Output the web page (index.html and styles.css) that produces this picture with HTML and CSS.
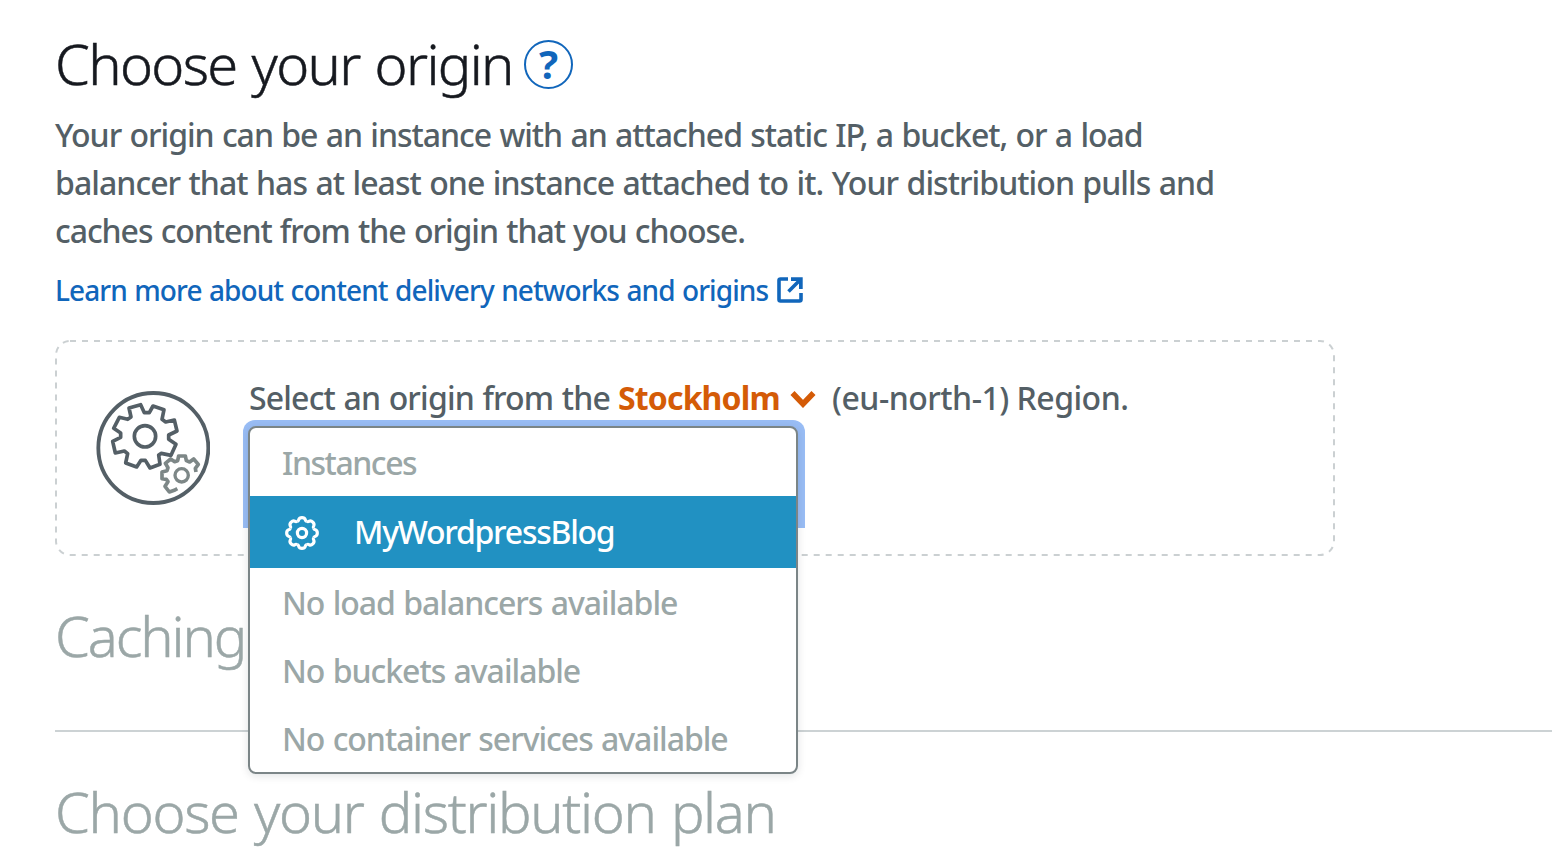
FILE: index.html
```html
<!DOCTYPE html>
<html lang="en">
<head>
<meta charset="utf-8">
<title>Choose your origin</title>
<link rel="stylesheet" href="styles.css">
</head>
<body>
<main class="page">
  <div class="heading-row">
    <h1 class="heading heading-main">Choose your origin</h1>
    <span class="help">?</span>
  </div>
  <p class="intro">Your origin can be an instance with an attached static IP, a bucket, or a load<br><span class="intro-mid">balancer that has at least one instance attached to it. Your distribution pulls and</span><br><span class="intro-end">caches content from the origin that you choose.</span></p>
  <a class="learn"><span class="learn-text">Learn more about content delivery networks and origins</span>
    <svg class="external" viewBox="0 0 26 26" width="26" height="26"><path d="M11 2H3.5Q2 2 2 3.5V22.5Q2 24 3.5 24H22.5Q24 24 24 22.5V16M11.5 14.5L22 4" fill="none" stroke="currentColor" stroke-width="3.6"/><path d="M14 0.3H25.7V12H22V4H14Z" fill="currentColor"/></svg>
  </a>
  <section class="origin-box">
    <svg class="box-frame" width="1280" height="216"><rect x="1" y="1" width="1278" height="214" rx="14"/></svg>
    <svg class="gears" viewBox="48 48 342 342" width="114" height="114" fill="none" stroke-linejoin="round">
      <circle cx="220" cy="219" r="165" stroke="#545f66" stroke-width="11.5"/>
      <path d="M147 99L182 89L193 113H208L219 93L252 104L246 133L257 141L283 135L291 168L266 180V193L288 208L273 241L244 235L236 240L240 268L210 279L196 256H183L170 276L137 264L143 236L133 228L106 234L98 199L122 187V174L101 160L118 127L143 133L153 126Z" stroke="#545f66" stroke-width="11"/>
      <circle cx="195" cy="184" r="32" stroke="#545f66" stroke-width="11"/>
      <path d="M292 341L285 345L268 351L255 334L264 320L259 313L246 311V291L261 287L264 278L256 265L272 252L284 260L293 257L296 243H316L319 257L329 261L341 252L355 268L346 280L348 291" stroke="#7d8787" stroke-width="11"/>
      <circle cx="305" cy="301" r="20" stroke="#7d8787" stroke-width="10"/>
    </svg>
    <div class="chooser">
      <div class="region-line"><span class="lead">Select an origin from the</span><span class="region">Stockholm</span><svg class="chevron" viewBox="0 0 26 18" width="26" height="18"><path d="M2.5 3L13 14L23.5 3" fill="none" stroke="currentColor" stroke-width="5.6"/></svg><span class="code">(eu-north-1) Region.</span></div>
      <div class="field">
        <div class="menu">
          <div class="row instances">Instances</div>
          <div class="row selected">
            <svg class="cog" viewBox="-18 -18 36 36" width="36" height="36" fill="none" stroke="#fff" stroke-width="3.2">
              <defs><path id="tooth" d="M-4.8 -11.6Q-3.5 -12.1 -3.2 -13.4Q-2.6 -15.3 0 -15.3Q2.6 -15.3 3.2 -13.4Q3.5 -12.1 4.8 -11.6"/></defs>
              <use href="#tooth"/><use href="#tooth" transform="rotate(45)"/><use href="#tooth" transform="rotate(90)"/><use href="#tooth" transform="rotate(135)"/><use href="#tooth" transform="rotate(180)"/><use href="#tooth" transform="rotate(225)"/><use href="#tooth" transform="rotate(270)"/><use href="#tooth" transform="rotate(315)"/>
              <circle r="4.6"/>
            </svg>
            <span class="name">MyWordpressBlog</span>
          </div>
          <div class="row">No load balancers available</div>
          <div class="row">No buckets available</div>
          <div class="row">No container services available</div>
        </div>
      </div>
    </div>
  </section>
  <h2 class="heading muted caching">Caching</h2>
  <hr class="divider">
  <h2 class="heading muted plan">Choose your distribution plan</h2>
</main>
</body>
</html>
```
FILE: styles.css
```css
html, body { margin: 0; height: 860px; overflow: hidden; background: #fff; }
body { font-family: "Noto Sans", "Open Sans", sans-serif; font-size: 32px; font-weight: 500; color: #545f66; }
.page { padding: 28px 0 0 55px; }
.heading-row { display: flex; align-items: center; height: 70px; gap: 11px; }
.heading { margin: 0; font-size: 56px; line-height: 70px; font-weight: 300; white-space: nowrap; -webkit-text-stroke: 0.5px currentColor; word-spacing: 2px; }
.heading-main { width: 458px; color: #16191f; letter-spacing: -1.65px; }
.muted { color: #9ba7a7; letter-spacing: -1.3px; }
.help { box-sizing: border-box; width: 49px; height: 49px; margin-top: 2px; border: 2px solid #1166bb; border-radius: 50%; color: #1166bb; font-size: 40px; line-height: 44px; font-weight: 700; text-align: center; }
.intro { margin: 13px 0 0; line-height: 48px; letter-spacing: -1.02px; word-spacing: 1px; white-space: nowrap; }
.intro-mid { letter-spacing: -0.95px; }
.intro-end { letter-spacing: -1.05px; }
.learn { display: flex; align-items: center; gap: 10px; height: 42px; margin-top: 14px; color: #1166bb; font-size: 28px; letter-spacing: -0.91px; word-spacing: 1px; white-space: nowrap; }
.learn-text { width: 712px; }
.origin-box { position: relative; box-sizing: border-box; display: flex; align-items: flex-start; gap: 38px; width: 1280px; height: 216px; margin-top: 29px; padding: 34px 0 0 41px; }
.box-frame { position: absolute; inset: 0; fill: none; stroke: #cbd0d2; stroke-width: 2; stroke-dasharray: 6 6; }
.gears { flex: none; margin-top: 17px; }
.chooser { position: relative; }
.region-line { display: flex; align-items: center; height: 46px; line-height: 50px; white-space: nowrap; }
.region-line span { padding-top: 2px; }
.lead { width: 369px; padding-left: 1px; letter-spacing: -0.83px; word-spacing: 1px; }
.region { width: 172px; color: #d45b07; font-weight: 700; letter-spacing: -0.85px; }
.chevron { color: #d45b07; margin-top: 4px; }
.code { margin-left: 16px; letter-spacing: -0.5px; }
.field { position: relative; width: 562px; height: 108px; margin-left: -5px; border-radius: 12px 12px 0 0; background: #99bdf5; }
.menu { position: absolute; z-index: 2; left: 5px; top: 6px; box-sizing: border-box; width: 550px; height: 348px; border: 2px solid #7b8587; border-radius: 8px; background: #fff; box-shadow: 0 2px 8px rgba(0, 28, 36, .12); overflow: hidden; }
.row { height: 68px; padding-left: 32px; line-height: 70px; color: #9ba7a7; letter-spacing: -1.02px; word-spacing: 1px; white-space: nowrap; }
.instances { letter-spacing: -1.45px; }
.selected { display: flex; align-items: center; gap: 34px; height: 72px; padding-left: 34px; line-height: 74px; background: #2191c2; color: #fff; letter-spacing: -1.25px; }
.cog { margin-top: 2px; }
.caching { margin-top: 44px; letter-spacing: -2.1px; }
.divider { height: 2px; margin: 60px 0 44px; border: 0; background: #ccd2d4; }
```
